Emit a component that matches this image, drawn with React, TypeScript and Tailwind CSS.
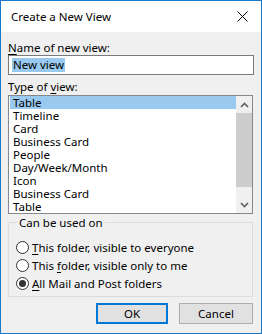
import React from "react";

const items = ["Table", "Timeline", "Card", "Business Card", "People", "Day/Week/Month", "Icon", "Business Card", "Table"];

function Radio({ checked }: { checked?: boolean }) {
  return (
    <span className="relative w-[13px] h-[13px] rounded-full border border-[#333333] bg-white flex items-center justify-center shrink-0">
      {checked && <span className="w-[7px] h-[7px] rounded-full bg-[#333333]" />}
    </span>
  );
}

export default function App() {
  return (
    <div
      className="w-[262px] h-[334px] border border-[#1979ca] bg-[#f0f0f0] flex flex-col text-[11.5px] text-black leading-[15px]"
      style={{ fontFamily: "'Noto Sans', 'Open Sans', sans-serif" }}
    >
      <div className="h-[31px] bg-white flex items-center justify-between pl-[10px] pr-[10px] shrink-0">
        <span>Create a New View</span>
        <svg width="11" height="11" viewBox="0 0 11 11" className="mr-[3px]">
          <path d="M0.5 0.5 L10.5 10.5 M10.5 0.5 L0.5 10.5" stroke="#000" strokeWidth="1" />
        </svg>
      </div>
      <div className="flex flex-col px-[7px]">
        <div className="mt-[8px] h-[15px]">
          <span className="underline underline-offset-2">N</span>ame of new view:
        </div>
        <div className="h-[20px] w-[246px] border border-[#7a7a7a] bg-white flex items-center pl-[3px]">
          <span className="bg-[#99c9ef] px-[1px] leading-[14px]">New view</span>
        </div>
        <div className="mt-[4px] h-[15px]">
          Type of <span className="underline underline-offset-2">v</span>iew:
        </div>
        <div className="mt-[1px] w-[245px] h-[119px] border border-[#828790] bg-white flex">
          <div className="flex-1 flex flex-col pl-[1px] overflow-hidden">
            {items.map((it, i) => (
              <div key={i} className={`h-[13px] leading-[13px] pl-[3px] ${i === 0 ? "bg-[#99c9ef]" : ""}`}>
                {it}
              </div>
            ))}
          </div>
          <div className="w-[16px] bg-[#f0f0f0] flex flex-col">
            <div className="h-[17px] flex items-center justify-center">
              <svg width="9" height="6" viewBox="0 0 9 6">
                <path d="M1 5 L4.5 1.5 L8 5" stroke="#606060" strokeWidth="1.6" fill="none" />
              </svg>
            </div>
            <div className="h-[74px] bg-[#cdcdcd]" />
            <div className="flex-1" />
            <div className="h-[17px] flex items-center justify-center">
              <svg width="9" height="6" viewBox="0 0 9 6">
                <path d="M1 1 L4.5 4.5 L8 1" stroke="#606060" strokeWidth="1.6" fill="none" />
              </svg>
            </div>
          </div>
        </div>
        <div className="relative mt-[8px] w-[245px] h-[75px] border border-[#dcdcdc] flex flex-col pl-[7px] pt-[16px] gap-[2px]">
          <span className="absolute left-[8px] top-[-8px] bg-[#f0f0f0] px-[2px]">Can be used on</span>
          <div className="flex items-center gap-[3px] h-[16px]">
            <Radio />
            <span>
              <span className="underline underline-offset-2">T</span>his folder, visible to everyone
            </span>
          </div>
          <div className="flex items-center gap-[3px] h-[16px]">
            <Radio />
            <span>
              This <span className="underline underline-offset-2">f</span>older, visible only to me
            </span>
          </div>
          <div className="flex items-center gap-[3px] h-[16px]">
            <Radio checked />
            <span>
              <span className="underline underline-offset-2">A</span>ll Mail and Post folders
            </span>
          </div>
        </div>
        <div className="mt-[6px] flex justify-end gap-[11px] pr-[1px]">
          <button className="w-[72px] h-[21px] border-2 border-[#0078d7] bg-[#e1e1e1] flex items-center justify-center">
            OK
          </button>
          <button className="w-[74px] h-[21px] border border-[#adadad] bg-[#e1e1e1] flex items-center justify-center">
            Cancel
          </button>
        </div>
      </div>
    </div>
  );
}
